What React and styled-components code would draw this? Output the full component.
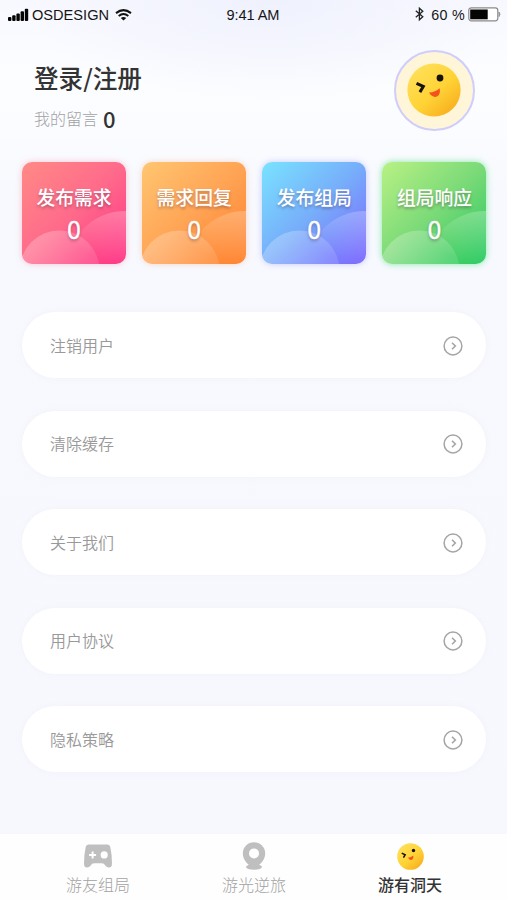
import React from 'react';
import styled, { createGlobalStyle } from 'styled-components';

const GlobalStyle = createGlobalStyle`
  * {
    box-sizing: border-box;
  }
  body {
    margin: 0;
    font-family: 'Noto Sans CJK SC', sans-serif;
  }
`;
const Screen = styled.div`
  width: 507px;
  height: 900px;
  display: flex;
  flex-direction: column;
  overflow: hidden;
  background:
    radial-gradient(ellipse 250px 100px at 270px 0, rgba(238, 240, 253, 0.9), rgba(238, 240, 253, 0)),
    linear-gradient(#f8f9ff 0, #fcfdff 80px, #fbfcff 130px, #f7f9fe 190px, #f7f8fe 100%);
`;
const StatusBar = styled.div`
  height: 30px;
  padding: 0 6px 0 8px;
  display: grid;
  grid-template-columns: 1fr auto 1fr;
  align-items: center;
  color: #151515;
  font-family: 'Liberation Sans', sans-serif;
  font-size: 14.6px;
  line-height: 30px;
`;
const StatusGroup = styled.div`
  display: flex;
  align-items: center;
  justify-content: ${props => props.$end ? 'flex-end' : 'flex-start'};
`;
const Carrier = styled.span`
  margin: 0 6px 0 3px;
`;
const Time = styled.span`
  padding-right: 3px;
  font-size: 14.6px;
  letter-spacing: -0.1px;
`;
const Percent = styled.span`
  margin: 0 3px 0 7px;
  font-size: 14.3px;
  letter-spacing: 0.3px;
`;
const Profile = styled.div`
  height: 132px;
  padding: 19.5px 32.5px 0 34px;
  display: flex;
  justify-content: space-between;
`;
const ProfileTitle = styled.div`
  margin-top: 9px;
  height: 36px;
  color: #333;
  font-size: 24.6px;
  font-weight: 500;
  line-height: 36px;
`;
const Messages = styled.div`
  margin-top: 9.5px;
  display: flex;
  align-items: center;
  height: 28px;
  color: #a2a2a2;
  font-size: 16px;
  font-weight: 300;
`;
const MessageCount = styled.span`
  margin-left: 5px;
  color: #333;
  font-size: 22px;
  font-weight: 500;
`;
const Avatar = styled.div`
  width: 81px;
  height: 81px;
  display: flex;
  align-items: center;
  justify-content: center;
  border: 2.5px solid #cfcdfb;
  border-radius: 50%;
  background: #fff5d8;
`;
const Cards = styled.div`
  padding: 0 21px 0 22px;
  display: grid;
  grid-template-columns: repeat(4, 103.5px);
  justify-content: space-between;
`;
const Card = styled.div`
  height: 102px;
  display: grid;
  border-radius: 10px;
  overflow: hidden;
  background: linear-gradient(135deg, ${props => props.$from}, ${props => props.$mid} 50%, ${props => props.$to} 95%);
  box-shadow: 0 0 6px ${props => props.$glow};
`;
const CardArt = styled.svg`
  grid-area: 1 / 1;
`;
const CardText = styled.div`
  grid-area: 1 / 1;
  padding-top: 20px;
  display: flex;
  flex-direction: column;
  align-items: center;
  color: #fff;
  text-shadow: 0 2px 3px rgba(60, 30, 60, 0.35);
`;
const CardTitle = styled.span`
  font-size: 18.8px;
  font-weight: 500;
  line-height: 30px;
`;
const CardCount = styled.span`
  font-size: 25px;
  font-weight: 400;
  line-height: 32px;
  -webkit-text-stroke: 0.3px #fff;
`;
const Menu = styled.div`
  flex: 1;
  padding: 48px 21px 0 22px;
  display: flex;
  flex-direction: column;
  gap: 32.5px;
`;
const MenuRow = styled.div`
  height: 66px;
  padding: 1px 23px 0 28px;
  display: flex;
  flex-shrink: 0;
  align-items: center;
  justify-content: space-between;
  border-radius: 33px;
  background: #fff;
  box-shadow: 0 0 5px rgba(240, 240, 248, 0.7);
  color: #999;
  font-size: 16px;
  font-weight: 350;
  line-height: 24px;
`;
const MenuLabel = styled.span`
  padding-bottom: 2px;
`;
const TabBar = styled.div`
  height: 66px;
  padding: 0 20px;
  display: grid;
  grid-template-columns: repeat(3, 156px);
  background: #fefefe;
`;
const Tab = styled.div`
  padding-top: 6px;
  display: flex;
  flex-direction: column;
  align-items: center;
  color: ${props => props.$active ? '#333' : '#a2a2a2'};
  font-size: 16px;
  font-weight: ${props => props.$active ? 500 : 300};
  line-height: 24px;
`;
const TabIcon = styled.div`
  height: 32px;
  display: flex;
  align-items: center;
`;

const Face = ({ id, size }) => (
  <svg width={size} height={size} viewBox="0 0 54 54">
    <defs>
      <linearGradient id={id} x1="0.15" y1="0.1" x2="0.85" y2="0.9">
        <stop offset="0" stopColor="#ffdf58" />
        <stop offset="0.55" stopColor="#ffd336" />
        <stop offset="1" stopColor="#f8b01f" />
      </linearGradient>
    </defs>
    <circle cx="27" cy="27" r="26.6" fill={`url(#${id})`} />
    <path d="M9.5 20.3l6.8 3.2-3.4 5.6" fill="none" stroke="#17120a" strokeWidth="3" />
    <circle cx="33" cy="15" r="3.4" fill="#17120a" />
    <path d="M22 29.5Q28.5 29.3 32.6 25.2Q34 31 30 33.6Q25.3 35 22 29.5z" fill="#f4511e" />
  </svg>
);

const SignalIcon = () => (
  <svg width="21" height="14" viewBox="0 0 21 14" fill="#050505">
    <rect x="0" y="9" width="3.4" height="4" rx="1" />
    <rect x="4.2" y="7.3" width="3.4" height="5.7" rx="1" />
    <rect x="8.4" y="5.5" width="3.4" height="7.5" rx="1" />
    <rect x="12.6" y="3.2" width="3.4" height="9.8" rx="1" />
    <rect x="16.8" y="0.7" width="3.4" height="12.3" rx="1" />
  </svg>
);

const WifiIcon = () => (
  <svg width="17" height="13" viewBox="0 0 17 13" fill="none" stroke="#111" strokeWidth="2">
    <path d="M1 4.1Q8.5-1.9 16 4.1" />
    <path d="M3.7 7Q8.5 3.1 13.3 7" />
    <path d="M8.5 11.6L5.8 8.9Q8.5 6.9 11.2 8.9z" fill="#111" stroke="none" />
  </svg>
);

const BluetoothIcon = () => (
  <svg width="9" height="16" viewBox="0 0 9 16" fill="none" stroke="#222" strokeWidth="1.3">
    <path d="M0.8 3.8l7 6-3.4 3V1.2l3.4 3-7 6" />
  </svg>
);

const BatteryIcon = () => (
  <svg width="33" height="17" viewBox="0 0 33 17">
    <rect x="0.8" y="0.8" width="29" height="13" rx="2.5" fill="#fff" stroke="#8a8a8a" strokeWidth="1.2" />
    <rect x="2.2" y="2.5" width="17.5" height="9.8" fill="#050505" />
    <path d="M31 5q2 2.3 0 4.6z" fill="#999" stroke="#999" />
  </svg>
);

const ArrowIcon = () => (
  <svg width="20" height="20" viewBox="0 0 20 20" fill="none" stroke="#a5a5a5">
    <circle cx="10" cy="10" r="8.9" strokeWidth="1.5" />
    <path d="M9 6.8l3.3 3.2L9 13.2" strokeWidth="1.6" />
  </svg>
);

const GamepadIcon = () => (
  <svg width="28" height="24" viewBox="0 0 28 24">
    <path d="M4.5 0.5H23.5Q25.8 0.5 26.3 3Q28.2 12 27.9 20.5Q27.8 23.5 25 23.5Q22.7 23.5 21.5 21.7Q20 19.3 17.8 19.3H10.2Q8 19.3 6.5 21.7Q5.3 23.5 3 23.5Q0.2 23.5 0.1 20.5Q-0.2 12 1.7 3Q2.2 0.5 4.5 0.5z" fill="#bfbfbf" />
    <path d="M8.6 7.4v7M5.1 10.9h7" stroke="#fff" strokeWidth="2" />
    <circle cx="20.2" cy="10.9" r="3.6" fill="#fff" />
  </svg>
);

const PlaceIcon = () => (
  <svg width="24" height="28" viewBox="0 0 24 28" fill="#bfbfbf">
    <ellipse cx="12" cy="25" rx="8" ry="2.8" />
    <path fillRule="evenodd" d="M12 0.3a11.2 11.2 0 0 1 11.2 11.2c0 5.6-4 10.2-9.4 14h-3.6C4.8 21.7 0.8 17.1 0.8 11.5A11.2 11.2 0 0 1 12 0.3zM12 6.4a5 5 0 1 0 0 10 5 5 0 0 0 0-10z" />
  </svg>
);

const StatCard = ({ card }) => (
  <Card $from={card.from} $mid={card.mid} $to={card.to} $glow={card.glow}>
    <CardArt width="104" height="102" viewBox="0 0 104 102">
      <defs>
        <linearGradient id={`${card.id}-right`} gradientUnits="userSpaceOnUse" x1="103" y1="48" x2="76" y2="98">
          <stop offset="0" stopColor="#fff" stopOpacity="0.25" />
          <stop offset="1" stopColor="#fff" stopOpacity="0" />
        </linearGradient>
        <linearGradient id={`${card.id}-left`} gradientUnits="userSpaceOnUse" x1="30" y1="68" x2="60" y2="104">
          <stop offset="0" stopColor="#fff" stopOpacity="0.24" />
          <stop offset="1" stopColor="#fff" stopOpacity="0.12" />
        </linearGradient>
      </defs>
      <circle cx="103" cy="107" r="58" fill={`url(#${card.id}-right)`} />
      <circle cx="37.5" cy="108.5" r="40" fill={`url(#${card.id}-left)`} />
    </CardArt>
    <CardText>
      <CardTitle>{card.title}</CardTitle>
      <CardCount>0</CardCount>
    </CardText>
  </Card>
);

const cards = [
  { id: 'publish', title: '发布需求', from: '#ff8a85', mid: '#ff6a8b', to: '#ff3886', glow: 'rgba(255, 120, 150, 0.4)' },
  { id: 'reply', title: '需求回复', from: '#ffc671', mid: '#ffa455', to: '#ff8430', glow: 'rgba(255, 150, 110, 0.35)' },
  { id: 'group', title: '发布组局', from: '#79e3ff', mid: '#77adfa', to: '#7b6bff', glow: 'rgba(130, 130, 255, 0.4)' },
  { id: 'respond', title: '组局响应', from: '#b9f184', mid: '#7bda78', to: '#2fcb62', glow: 'rgba(70, 225, 120, 0.65)' },
];

const menu = ['注销用户', '清除缓存', '关于我们', '用户协议', '隐私策略'];

const App = () => (
  <Screen>
    <GlobalStyle />
    <StatusBar>
      <StatusGroup>
        <SignalIcon />
        <Carrier>OSDESIGN</Carrier>
        <WifiIcon />
      </StatusGroup>
      <Time>9:41 AM</Time>
      <StatusGroup $end>
        <BluetoothIcon />
        <Percent>60 %</Percent>
        <BatteryIcon />
      </StatusGroup>
    </StatusBar>
    <Profile>
      <div>
        <ProfileTitle>登录/注册</ProfileTitle>
        <Messages>我的留言<MessageCount>0</MessageCount></Messages>
      </div>
      <Avatar><Face id="avatar-face" size={54} /></Avatar>
    </Profile>
    <Cards>
      {cards.map(card => <StatCard key={card.id} card={card} />)}
    </Cards>
    <Menu>
      {menu.map(label => (
        <MenuRow key={label}>
          <MenuLabel>{label}</MenuLabel>
          <ArrowIcon />
        </MenuRow>
      ))}
    </Menu>
    <TabBar>
      <Tab><TabIcon><GamepadIcon /></TabIcon>游友组局</Tab>
      <Tab><TabIcon><PlaceIcon /></TabIcon>游光逆旅</Tab>
      <Tab $active><TabIcon><Face id="tab-face" size={27} /></TabIcon>游有洞天</Tab>
    </TabBar>
  </Screen>
);

export default App;
